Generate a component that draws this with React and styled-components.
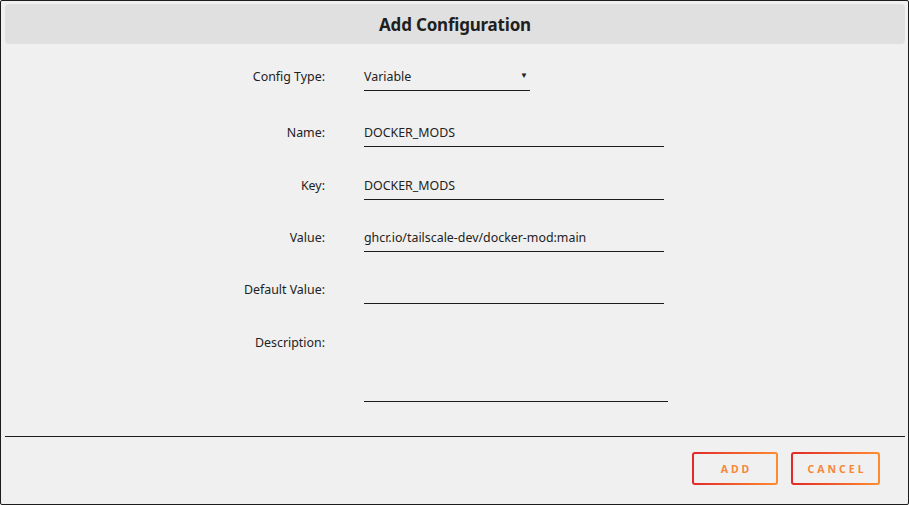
import React from "react";
import styled, { createGlobalStyle } from "styled-components";

const Global = createGlobalStyle`
  html, body { margin: 0; padding: 0; background: #f2f2f2; }
  body { font-family: "Noto Sans", "Open Sans", sans-serif; color: #222; }
  * { box-sizing: border-box; }
`;

const Dialog = styled.div`
  width: 909px;
  height: 505px;
  border: 1px solid #1c1c1c;
  border-radius: 2px;
  background: #f0f0f0;
  padding: 3px 3px 0 4px;
  display: flex;
  flex-direction: column;
`;

const Header = styled.div`
  height: 40px;
  padding-top: 1px;
  background: #e0e0e0;
  border-radius: 4px;
  display: flex;
  align-items: center;
  justify-content: center;
  font-size: 17px;
  font-weight: 700;
  color: #1f1f1f;
  letter-spacing: -0.2px;
`;

const Form = styled.div`
  display: flex;
  flex-direction: column;
  padding-top: 19px;
  height: 392px;
`;

const Row = styled.div`
  display: grid;
  grid-template-columns: 320px auto;
  column-gap: 39px;
  align-items: start;
  margin-top: ${(p) => p.$gap || 0}px;
`;

const Label = styled.label`
  text-align: right;
  font-size: 12.4px;
  color: #222;
  line-height: 27px;
`;

const Field = styled.div`
  width: ${(p) => p.$w}px;
  height: ${(p) => p.$h || 28}px;
  border-bottom: 1px solid #1c1c1c;
  font-size: 12.4px;
  line-height: 27px;
  color: #222;
  display: flex;
  justify-content: space-between;
`;

const Caret = styled.span`
  font-size: 8px;
  padding-right: 2px;
  line-height: 24px;
`;

const Divider = styled.div`
  height: 1px;
  background: #1c1c1c;
  margin-top: 0;
`;

const Footer = styled.div`
  display: flex;
  justify-content: flex-end;
  gap: 13px;
  padding: 15px 25px 0 0;
`;

const Button = styled.button`
  width: ${(p) => p.$w}px;
  height: 33px;
  border: 2px solid transparent;
  border-radius: 3px;
  background:
    linear-gradient(#f0f0f0, #f0f0f0) padding-box,
    linear-gradient(90deg, #e22828, #ff8c2f) border-box;
  font-family: "Noto Sans", "Open Sans", sans-serif;
  font-size: 10.5px;
  font-weight: 700;
  letter-spacing: 3px;
  color: #f5883a;
  padding: 0 0 0 3px;
  cursor: pointer;
`;

const rows = [
  { label: "Config Type:", value: "Variable", w: 166, select: true, gap: 0 },
  { label: "Name:", value: "DOCKER_MODS", w: 300, gap: 28 },
  { label: "Key:", value: "DOCKER_MODS", w: 300, gap: 25 },
  { label: "Value:", value: "ghcr.io/tailscale-dev/docker-mod:main", w: 300, gap: 24 },
  { label: "Default Value:", value: "", w: 300, gap: 24 },
  { label: "Description:", value: "", w: 304, h: 73, gap: 25 },
];

export default function App() {
  return (
    <>
      <Global />
      <Dialog>
        <Header>Add Configuration</Header>
        <Form>
          {rows.map((r) => (
            <Row key={r.label} $gap={r.gap}>
              <Label>{r.label}</Label>
              <Field $w={r.w} $h={r.h}>
                <span>{r.value}</span>
                {r.select && <Caret>▼</Caret>}
              </Field>
            </Row>
          ))}
        </Form>
        <Divider />
        <Footer>
          <Button $w={86}>ADD</Button>
          <Button $w={89}>CANCEL</Button>
        </Footer>
      </Dialog>
    </>
  );
}
